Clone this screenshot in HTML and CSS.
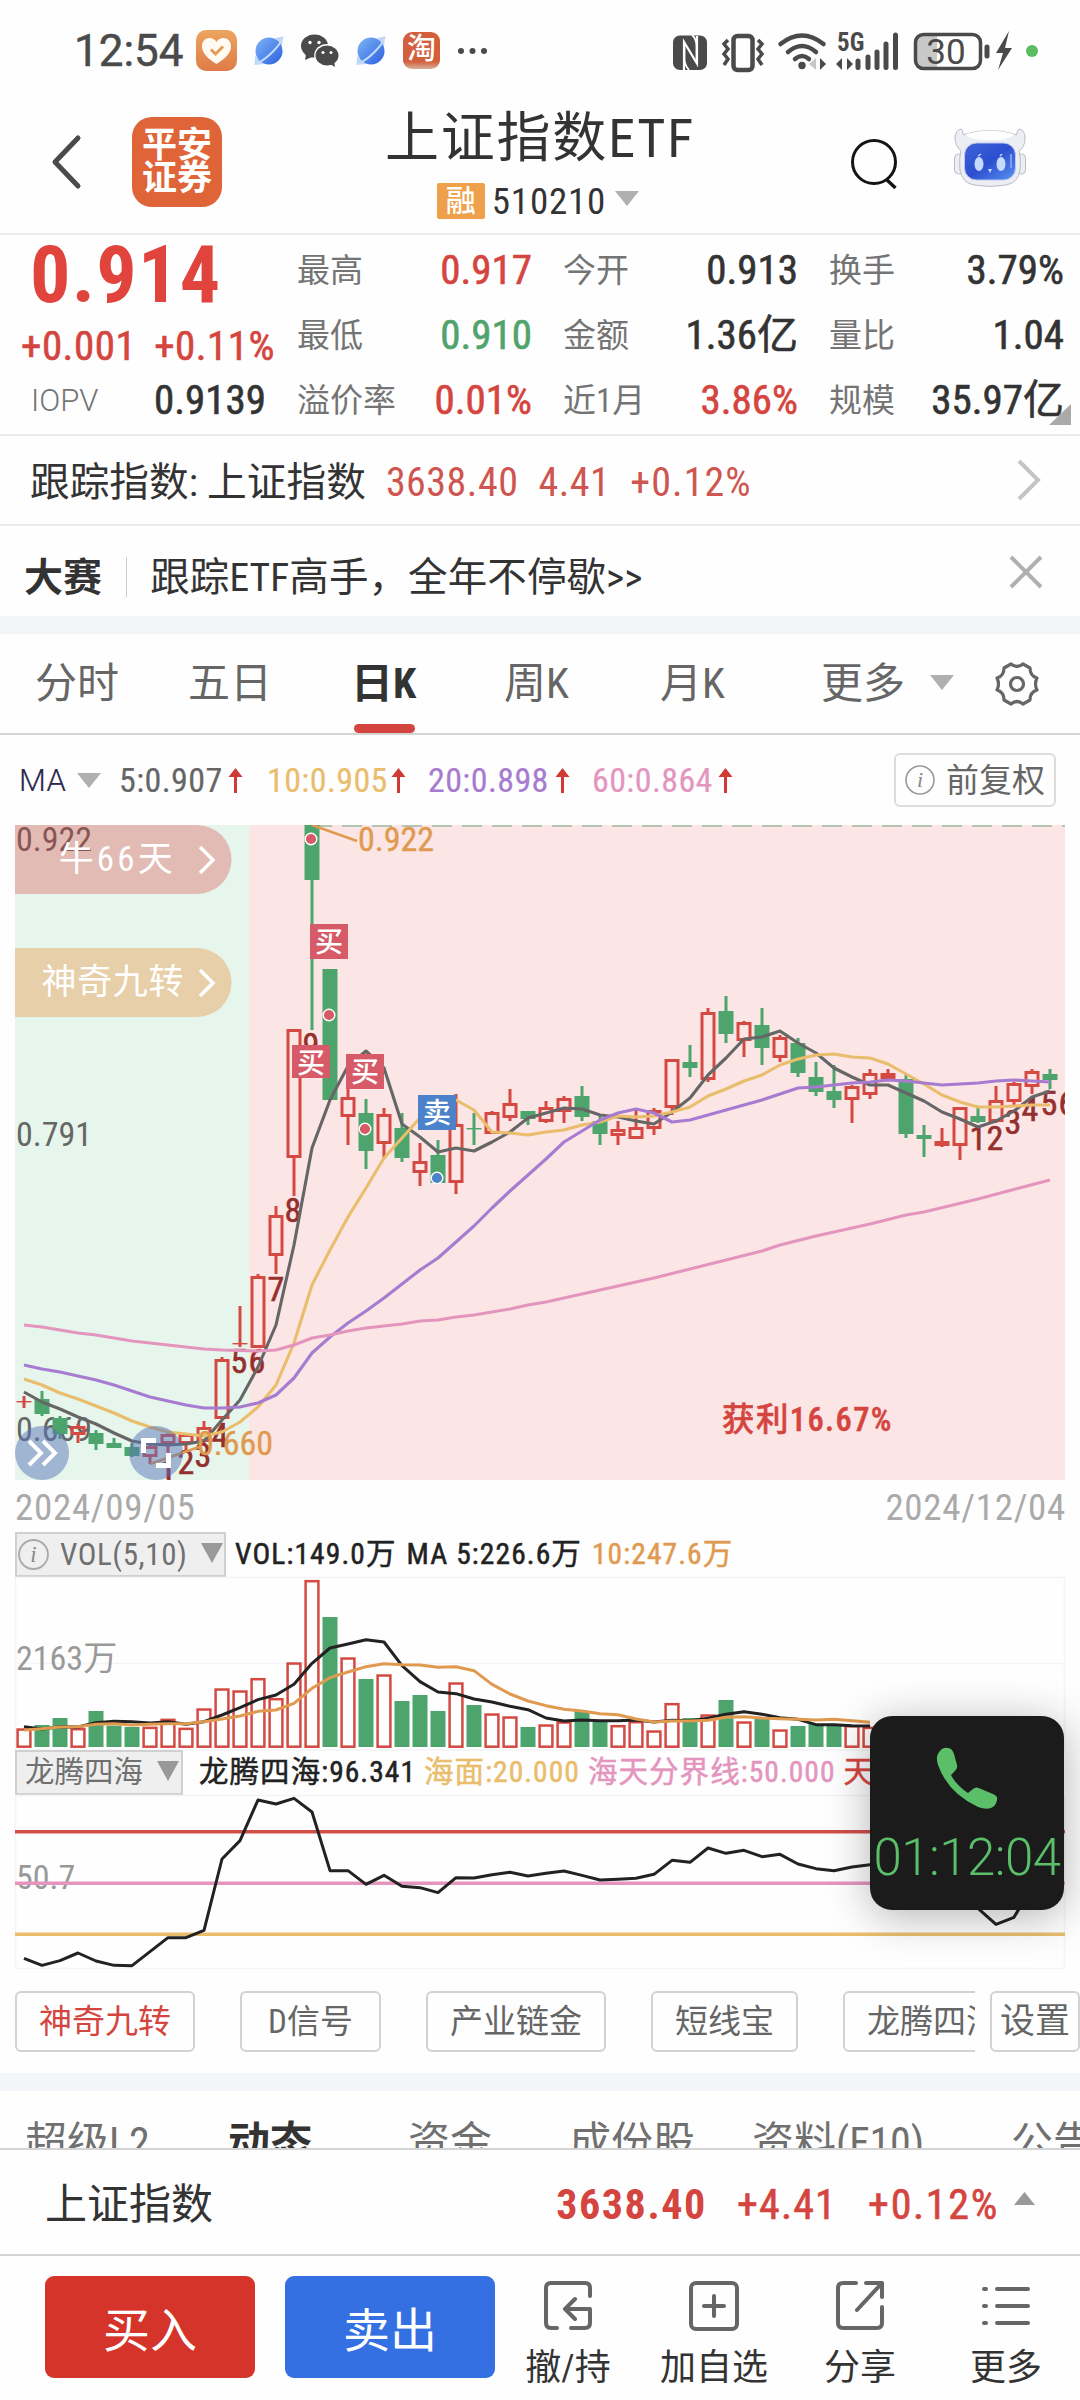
FILE: index.html
```html
<!DOCTYPE html>
<html lang="zh-CN">
<head>
<meta charset="utf-8">
<title>上证指数ETF 510210</title>
<link rel="stylesheet" href="styles.css">
</head>
<body>
<div class="app">

<header class="status">
  <div class="status-left">
    <span class="clock">12:54</span>
    <svg class="ic-heart" width="41" height="41" viewBox="0 0 41 41"><defs><linearGradient id="gh" x1="0" y1="0" x2="0" y2="1"><stop offset="0" stop-color="#eba560"/><stop offset="1" stop-color="#df7b47"/></linearGradient></defs><rect width="41" height="41" rx="10" fill="url(#gh)"/><path d="M20.500 34C12 29 6 23 6 16.500C6 11 9.500 8 13.500 8C16.500 8 19 9.500 20.500 12C22 9.500 24.500 8 27.500 8C31.500 8 35 11 35 16.500C35 23 29 29 20.500 34Z" fill="#fffaf2"/><path d="M15 19.500l4.500 4.500l7.500-7.500" fill="none" stroke="#e69a58" stroke-width="3"/></svg>
    <svg class="ic-planet" width="30" height="30" viewBox="0 0 30 30"><defs><linearGradient id="gp" x1="0" y1="0" x2="1" y2="1"><stop offset="0" stop-color="#7fb6f5"/><stop offset="1" stop-color="#2b5fe0"/></linearGradient></defs><path d="M21 2L29 .5L28 10zM1 20L.5 29L10 28z" fill="#c3d6f8"/><circle cx="15" cy="15" r="13.500" fill="url(#gp)"/><path d="M29 1C26 10 13 23 2 28" fill="none" stroke="#c3dcfb" stroke-width="2"/></svg>
    <svg class="ic-wechat" width="38" height="33" viewBox="0 0 38 33"><ellipse cx="13.500" cy="12" rx="13.500" ry="11.500" fill="#4a4a4a"/><path d="M5 20l-1 6l7-3z" fill="#4a4a4a"/><ellipse cx="26" cy="21.500" rx="12.800" ry="11.500" fill="#fff"/><ellipse cx="26" cy="21.500" rx="11.500" ry="10" fill="#4a4a4a"/><path d="M29 30l5 3l-1-6z" fill="#4a4a4a"/><g fill="#fff"><circle cx="9" cy="8.500" r="1.700"/><circle cx="18" cy="8.500" r="1.700"/><circle cx="22" cy="18.500" r="1.500"/><circle cx="30" cy="18.500" r="1.500"/></g></svg>
    <svg class="ic-planet" width="30" height="30" viewBox="0 0 30 30"><path d="M21 2L29 .5L28 10zM1 20L.5 29L10 28z" fill="#c3d6f8"/><circle cx="15" cy="15" r="13.500" fill="url(#gp)"/><path d="M29 1C26 10 13 23 2 28" fill="none" stroke="#c3dcfb" stroke-width="2"/></svg>
    <span class="ic-tao">淘</span>
    <svg width="31" height="8" viewBox="0 0 31 8" fill="#4a4a4a"><circle cx="4" cy="4" r="3"/><circle cx="15.500" cy="4" r="3"/><circle cx="27" cy="4" r="3"/></svg>
  </div>
  <svg class="status-right" width="370" height="44" viewBox="670 28 370 44" fill="none" stroke="#4a4a4a">
    <rect x="673" y="34.500" width="34" height="34.500" rx="7" fill="#4a4a4a" stroke="none"/>
    <path d="M684 69V41L697 62.500V35" stroke="#fff" stroke-width="2.200"/><path d="M684.500 44V58Q684.500 64 689 69M696.500 60V45Q696.500 38 692 34" stroke="#fff" stroke-width="1.800"/>
    <rect x="733.500" y="35" width="19" height="34" rx="4" stroke-width="4.500"/>
    <path d="M728 39l-4 4l4 5l-4 5l4 5l-4 6M758 39l4 4l-4 5l4 5l-4 5l4 6" stroke-width="3.500"/>
    <path d="M780.500 43q21.500-17 43 0M788 51q14-12 28 0M795 58q7-6 14 0" stroke-width="4.500" stroke-linecap="round"/><circle cx="802" cy="64.500" r="3.700" fill="#4a4a4a" stroke="none"/>
    <path d="M816 57v12l-7-6z" fill="#c8c8c8" stroke="none"/><path d="M820 57v12l6-6z" fill="#4a4a4a" stroke="none"/>
    <path d="M842 57v12l-6-6zM847 57v12l6-6z" fill="#4a4a4a" stroke="none"/>
    <path d="M858 60v6.500M868 56v10.500M877 51v15.500M886 43v23.500M895.500 34v32.500" stroke-width="5" stroke-linecap="round"/>
    <path d="M923 33.500h14v34h-14q-7 0-7-7v-20q0-7 7-7z" fill="#c8c8c8" stroke="none"/>
    <rect x="915.500" y="33.500" width="65" height="34" rx="8" stroke-width="3.500"/><path d="M987 46v9" stroke-width="5" stroke-linecap="round"/>
    <path d="M1009 30l-13 22h7l-5 17l14-22h-7z" fill="#4a4a4a" stroke="none"/><circle cx="1032" cy="50" r="6" fill="#5bbd63" stroke="none"/>
    <text class="sb-5g" x="837" y="50">5G</text><text class="sb-bat" x="946" y="62.500">30</text>
  </svg>
</header>

<div class="titlebar">
  <svg class="back" width="32" height="56" viewBox="0 0 32 56"><path d="M29 4L6 28L29 52" fill="none" stroke="#4a4a4a" stroke-width="5" stroke-linecap="round" stroke-linejoin="round"/></svg>
  <div class="broker"><span>平安</span><span>证券</span></div>
  <div class="title">
    <h1>上证指数ETF</h1>
    <div class="code"><b>融</b><span>510210</span><svg width="24" height="15"><path d="M0 0h24L12 15z" fill="#b0b0b0"/></svg></div>
  </div>
  <svg class="search" width="50" height="52" viewBox="0 0 50 52" fill="none" stroke="#141414"><circle cx="24" cy="24" r="21.500" stroke-width="3"/><path d="M37 42l8.500 8" stroke-width="3.500"/></svg>
  <svg class="robot" width="72" height="60" viewBox="0 0 72 60"><defs><linearGradient id="gr" x1="0" y1="0" x2="1" y2="1"><stop offset="0" stop-color="#3f63d8"/><stop offset=".5" stop-color="#2c4fd0"/><stop offset="1" stop-color="#5a94f2"/></linearGradient></defs><g fill="#eceef3" stroke="#b9bdc8" stroke-width="1"><rect x=".5" y="26" width="9" height="20" rx="4"/><rect x="62.500" y="26" width="9" height="20" rx="4"/><path d="M1 9Q2 2 7 1Q9 1 9 6Q9 8 12 6Q36-1 60 6Q63 8 63 6Q63 1 66 1Q71 3 71 10Q71 19 65 23Q67 30 66 42Q64 55 52 57Q36 60 20 57Q8 55 6 42Q5 30 7 23Q1 18 1 9Z"/></g><path d="M12 6Q36-1 60 6Q57 12 36 12Q15 12 12 6Z" fill="#fff"/><rect x="10.500" y="15" width="51" height="37" rx="12" fill="url(#gr)" stroke="#b8c8f0"/><g fill="#c6dafb"><ellipse cx="25" cy="36" rx="4.500" ry="7"/><ellipse cx="47" cy="36" rx="4.500" ry="7"/><path d="M34 41h4l-2 4z"/></g><path d="M24 28l3-2M46 28l2-2" stroke="#c6dafb" stroke-width="1.500"/><path d="M57 26v14" stroke="#7f9cec" stroke-width="2"/></svg>
</div>

<section class="quote">
  <div class="quote-main">
    <div class="price">0.914</div>
    <div class="change"><span>+0.001</span><span>+0.11%</span></div>
    <div class="pair iopv"><span class="k">IOPV</span><span class="v">0.9139</span></div>
  </div>
  <div class="col"><div class="pair"><span class="k">最高</span><span class="v up">0.917</span></div><div class="pair"><span class="k">最低</span><span class="v down">0.910</span></div><div class="pair"><span class="k">溢价率</span><span class="v up">0.01%</span></div></div>
  <div class="col"><div class="pair"><span class="k">今开</span><span class="v">0.913</span></div><div class="pair"><span class="k">金额</span><span class="v">1.36亿</span></div><div class="pair"><span class="k">近1月</span><span class="v up">3.86%</span></div></div>
  <div class="col"><div class="pair"><span class="k">换手</span><span class="v">3.79%</span></div><div class="pair"><span class="k">量比</span><span class="v">1.04</span></div><div class="pair"><span class="k">规模</span><span class="v">35.97亿</span></div></div>
  <svg class="corner" width="22" height="21"><path d="M22 0v21H0z" fill="#aaa"/></svg>
</section>

<section class="track">
  <span class="track-name">跟踪指数: 上证指数</span><span class="up">3638.40</span><span class="up">4.41</span><span class="up">+0.12%</span>
  <svg width="26" height="44" viewBox="0 0 26 44"><path d="M3 3L22 22L3 41" fill="none" stroke="#c4c4c4" stroke-width="4"/></svg>
</section>

<section class="contest">
  <b>大赛</b><i></i><span>跟踪ETF高手，全年不停歇&gt;&gt;</span>
  <svg width="34" height="34" viewBox="0 0 34 34"><path d="M2 2L32 32M32 2L2 32" stroke="#b0b0b0" stroke-width="4"/></svg>
</section>

<div class="band"></div>

<nav class="periods">
  <span>分时</span><span>五日</span><span class="on">日K</span><span>周K</span><span>月K</span><span>更多</span>
  <svg class="tri" width="24" height="15"><path d="M0 0h24L12 15z" fill="#b0b0b0"/></svg>
  <svg class="gear" width="44" height="46" viewBox="-22 -23 44 46" fill="none" stroke="#666" stroke-width="3.200" stroke-linejoin="round"><path d="M-6-20Q0-15 6-20L13-16Q13-8 20-6Q17 0 20 6Q13 8 13 16L6 20Q0 15-6 20L-13 16Q-13 8-20 6Q-17 0-20-6Q-13-8-13-16Z"/><circle r="6.500"/></svg>
</nav>

<div class="ma">
  <span class="m0">MA</span><svg width="24" height="15"><path d="M0 0h24L12 15z" fill="#b0b0b0"/></svg>
  <span class="m5">5:0.907</span><svg class="arr" width="15" height="25"><path d="M7.500 0L14.500 9H9v16H6V9H.5z" fill="#cf3a34"/></svg>
  <span class="m10">10:0.905</span><svg class="arr" width="15" height="25"><path d="M7.500 0L14.500 9H9v16H6V9H.5z" fill="#cf3a34"/></svg>
  <span class="m20">20:0.898</span><svg class="arr" width="15" height="25"><path d="M7.500 0L14.500 9H9v16H6V9H.5z" fill="#cf3a34"/></svg>
  <span class="m60">60:0.864</span><svg class="arr" width="15" height="25"><path d="M7.500 0L14.500 9H9v16H6V9H.5z" fill="#cf3a34"/></svg>
  <div class="fq"><svg width="30" height="30" viewBox="0 0 30 30"><circle cx="15" cy="15" r="14" fill="none" stroke="#999" stroke-width="1.600"/><text class="info-i" x="15" y="22">i</text></svg>前复权</div>
</div>

<div class="kline">
  <svg id="kchart" width="1050" height="655" viewBox="15 825 1050 655"></svg>
  <div class="pill bull"><span>牛66天</span><svg width="18" height="30" viewBox="0 0 18 30"><path d="M2 2L15 15L2 28" fill="none" stroke="#fff" stroke-width="3.500"/></svg></div>
  <div class="pill nine"><span>神奇九转</span><svg width="18" height="30" viewBox="0 0 18 30"><path d="M2 2L15 15L2 28" fill="none" stroke="#fff" stroke-width="3.500"/></svg></div>
</div>
<div class="dates"><span>2024/09/05</span><span>2024/12/04</span></div>

<div class="sub">
  <div class="sel vol-sel"><svg width="31" height="31" viewBox="0 0 30 30"><circle cx="15" cy="15" r="14" fill="none" stroke="#aaa" stroke-width="1.800"/><text class="info-i" x="15" y="22">i</text></svg><span>VOL(5,10)</span><svg width="22" height="20"><path d="M0 0h22L11 20z" fill="#999"/></svg></div>
  <div class="legend vol-legend"><span>VOL:149.0万</span><span>MA 5:226.6万</span><span class="or">10:247.6万</span></div>
</div>
<svg id="vchart" class="pane" width="1050" height="173" viewBox="15 1577 1050 173"></svg>
<div class="sub">
  <div class="sel dragon-sel"><span>龙腾四海</span><svg width="22" height="20"><path d="M0 0h22L11 20z" fill="#999"/></svg></div>
  <div class="legend dragon-legend"><span>龙腾四海:96.341</span><span class="yl">海面:20.000</span><span class="pk">海天分界线:50.000</span><span class="up">天</span></div>
</div>
<svg id="dchart" class="pane" width="1050" height="174" viewBox="15 1795 1050 174"></svg>

<div class="chips">
  <div class="chip-scroll"><span class="chip sel-chip">神奇九转</span><span class="chip">D信号</span><span class="chip">产业链金</span><span class="chip">短线宝</span><span class="chip">龙腾四海</span></div>
  <span class="chip setting">设置</span>
</div>

<div class="band"></div>

<nav class="info">
  <span>超级L2</span><span class="active">动态</span><span>资金</span><span>成份股</span><span>资料(F10)</span><span>公告</span>
</nav>

<section class="index">
  <span class="index-name">上证指数</span><b>3638.40</b><span class="up">+4.41</span><span class="up">+0.12%</span>
  <svg width="21" height="13"><path d="M0 13h21L10.500 0z" fill="#999"/></svg>
</section>

<footer class="actions">
  <button class="buy">买入</button><button class="sell">卖出</button>
  <div class="act first"><svg width="52" height="52" viewBox="0 0 52 52"><path d="M48 16V8Q48 3 43 3H9Q4 3 4 8V43Q4 48 9 48H15M29 48H43Q48 48 48 43V29H25M33 19L23 29L33 39"/></svg><span>撤/持</span></div>
  <div class="act"><svg width="52" height="52" viewBox="0 0 52 52"><rect x="3" y="3" width="46" height="46" rx="5"/><path d="M26 16v20M16 26h20"/></svg><span>加自选</span></div>
  <div class="act"><svg width="52" height="52" viewBox="0 0 52 52"><path d="M22 3H9Q4 3 4 8V43Q4 48 9 48H43Q48 48 48 43V27M32 3H48V17M48 3L23 30"/></svg><span>分享</span></div>
  <div class="act"><svg width="52" height="52" viewBox="0 0 52 52"><path d="M4 9h2M4 26h2M4 43h2M17 9h31M17 26h31M17 43h31"/></svg><span>更多</span></div>
</footer>

<aside class="call">
  <svg width="62" height="62" viewBox="0 0 62 62"><path d="M4 4Q7 0 12 1Q16 1 18 7L21 18Q22 22 18 25L15 28Q20 38 32 46L37 42Q40 39 45 42L57 47Q62 49 61 53Q60 59 55 61Q50 63 42 60Q12 46 2 18Q-1 9 4 4Z" fill="#5bbf6a"/></svg>
  <span>01:12:04</span>
</aside>
</div>
<script src="chart.js"></script>
</body>
</html>
```
FILE: styles.css
```css
* { box-sizing: border-box; }
body { margin: 0; background: #fff; }
.app { position: relative; width: 1080px; height: 2400px; overflow: hidden; display: flex; flex-direction: column; background: #fefefe; color: #333; font-family: "Roboto Condensed", "Noto Sans CJK SC", sans-serif; font-size: 33px; line-height: 1; }
.app > * { flex: none; }
svg { display: block; flex: none; overflow: visible; }
span, b { white-space: nowrap; }
.up { color: #d5453f; }
.down { color: #4fa36c; }

.status { height: 96px; padding: 5px 40px 0 74px; display: flex; align-items: center; justify-content: space-between; }
.status-left { display: flex; align-items: center; height: 90px; }
.clock { font: 400 44px Roboto, sans-serif; color: #4a4a4a; width: 122px; -webkit-text-stroke: .5px #4a4a4a; }
.ic-planet { margin: 0 17px; }
.ic-tao { width: 37px; height: 37px; margin-right: 17px; border-radius: 9px; background: linear-gradient(#d3603c 80%, #d9b09c); color: #fff; font-size: 29px; font-weight: 500; line-height: 34px; text-align: center; }
.sb-5g { font: 700 25px "Roboto Condensed", sans-serif; fill: #4a4a4a; stroke: none; }
.sb-bat { font: 400 35px Roboto, sans-serif; fill: #4a4a4a; stroke: none; text-anchor: middle; }

.titlebar { height: 139px; padding: 0 53px 0 49px; border-bottom: 2px solid #eaeaea; display: flex; align-items: flex-start; }
.back { margin-top: 38px; }
.broker { width: 90px; height: 90px; margin: 21px 0 0 51px; border-radius: 20px; background: #df6539; color: #fff; font-size: 35px; font-weight: 700; line-height: 33px; display: flex; flex-direction: column; align-items: center; justify-content: center; }
.title { margin-left: 165px; width: 306px; display: flex; flex-direction: column; align-items: center; }
h1 { margin: 16px 0 0; font: 400 54px/54px "Roboto Condensed", "Noto Sans CJK SC", sans-serif; letter-spacing: 1.800px; white-space: nowrap; }
.code { display: flex; align-items: center; margin-top: 17px; height: 36px; margin-right: 4px; font-size: 37px; }
.code b { width: 48px; height: 36px; background: #efa04a; color: #fff; font-size: 30px; font-weight: 500; line-height: 35px; text-align: center; margin-right: 7px; border-radius: 2px; }
.code span { letter-spacing: .8px; }
.code svg { margin: -6px 0 0 9px; }
.search { margin: 42px 0 0 157px; }
.robot { margin: 32px 0 0 54px; }

.quote { position: relative; height: 201px; border-bottom: 2px solid #eaeaea; padding-left: 20px; display: flex; }
.quote-main { flex: none; width: 246px; margin-right: 31px; padding-top: 1px; }
.price { font-size: 80px; font-weight: 700; line-height: 78px; color: #e0443c; padding-left: 10px; letter-spacing: 1.300px; }
.change { display: flex; justify-content: space-between; margin-left: 1px; width: 254px; height: 64px; align-items: center; color: #d5453f; font-size: 41px; letter-spacing: .5px; -webkit-text-stroke: .6px; }
.col { flex: none; width: 235px; margin-right: 31px; padding-top: 3px; }
.pair { display: flex; align-items: center; justify-content: space-between; height: 65px; }
.iopv { height: 47px; padding-left: 11px; margin-top: -1px; }
.k { color: #747474; }
.iopv .k { font-family: Roboto, sans-serif; font-weight: 300; font-size: 31px; }
.v { font-size: 41px; -webkit-text-stroke: .6px; }
.corner { position: absolute; right: 9px; bottom: 9px; }

.track { height: 90px; border-bottom: 2px solid #eaeaea; padding: 5px 38px 0 30px; display: flex; align-items: center; font-size: 40px; gap: 20px; }
.track .up { color: #cf5650; letter-spacing: .5px; }
.track .up:last-of-type { letter-spacing: 1.100px; }
.track svg { margin-left: auto; margin-top: -6px; }
.track-name { font-size: 39.700px; }
.contest { height: 90px; padding: 14px 37px 0 24px; display: flex; align-items: center; font-size: 39.500px; letter-spacing: .1px; }
.contest b { font-size: 39px; }
.contest i { width: 1px; height: 40px; background: #ccc; margin: -3px 23px 0 24px; }
.contest svg { margin-left: auto; margin-top: -12px; }
.band { height: 18px; background: #f3f5f9; }

.periods { height: 101px; border-bottom: 2px solid #d4d4d4; display: grid; grid-template-columns: 153px 163px 153px 156px 161px 109px 65px 60px; padding-left: 35px; align-items: center; font-size: 42px; color: #666; }
.periods span { position: relative; }
.periods .on { font-weight: 700; color: #333; }
.on::after { content: ""; position: absolute; left: 3px; top: 61px; width: 61px; height: 9px; border-radius: 5px; background: #d5453f; }
.tri { margin-top: -3px; }

.ma { height: 90px; padding: 0 24px 0 19px; display: flex; align-items: center; font-size: 34px; }
.ma span { -webkit-text-stroke: .2px; letter-spacing: .4px; }
.ma .m0 { font-family: Roboto, sans-serif; font-weight: 300; font-size: 31px; color: #2a2950; width: 58px; }
.ma .m5 { width: 109px; margin-left: 18px; color: #666; }
.ma .m10 { width: 124px; color: #e9bd6c; margin-left: 24px; }
.ma .m20 { width: 127px; color: #a77bd0; margin-left: 22px; }
.ma .m60 { width: 126px; color: #e495be; margin-left: 22px; }
.fq { margin-left: auto; width: 162px; height: 54px; border: 2px solid #ddd; border-radius: 6px; color: #666; font-size: 33px; display: flex; align-items: center; justify-content: center; gap: 11px; }
.info-i { font: italic 22px "Liberation Serif", serif; fill: #888; text-anchor: middle; }

.kline { position: relative; height: 655px; padding-left: 15px; }
#kchart { overflow: hidden; }
.pill { position: absolute; left: 15px; width: 216px; height: 69px; display: flex; align-items: center; justify-content: flex-end; color: #fff; font-size: 35px; padding-right: 15px; }
.pill svg { margin-left: 14px; }
.bull { top: 0; }
.bull span { letter-spacing: 3.200px; margin-right: 8px; }
.nine { top: 123px; }
.nine span { letter-spacing: .6px; }
.dates { height: 52px; padding: 3px 14px 0 15px; display: flex; align-items: center; justify-content: space-between; color: #aaa; font-size: 37px; letter-spacing: .7px; }

.sub { height: 45px; padding-left: 15px; display: flex; align-items: center; }
.sel { height: 45px; border: 2px solid #d0d0d0; background: #efefef; color: #707070; display: flex; align-items: center; font-size: 31px; }
.vol-sel { width: 211px; padding-left: 1px; }
.vol-sel span { margin: 0 15px 0 11px; width: 126px; letter-spacing: .6px; }
.dragon-sel { width: 168px; padding-left: 8px; font-size: 29.500px; gap: 14px; }
.sel svg:last-child { margin-top: -4px; }
.legend { display: flex; color: #222; font-size: 29.500px; -webkit-text-stroke: .5px; }
.vol-legend { margin-left: 9px; gap: 10px; letter-spacing: 1.100px; }
.dragon-legend { margin-left: 16px; gap: 8px; letter-spacing: 1.050px; }
.or { color: #e09a50; }
.yl { color: #e9bd6c; }
.pk { color: #e495be; }
.pane { margin-left: 15px; }

.chips { height: 104px; padding: 22px 0 0 15px; display: flex; }
.chip-scroll { width: 960px; overflow: hidden; display: flex; gap: 45px; }
.chip { flex: none; height: 61px; min-width: 141px; border: 2px solid #d2d2d2; border-radius: 6px; padding: 0 22px; color: #666; font-size: 33px; line-height: 58px; text-align: center; }
.sel-chip { color: #d5453f; }
.setting { margin-left: 15px; width: 90px; min-width: 0; padding: 0; font-size: 35px; }

.info { height: 59px; overflow: hidden; border-bottom: 2px solid #d4d4d4; padding: 26px 0 0 25px; display: grid; grid-template-columns: 203px 180px 161px 183px 259px 100px; font-size: 42px; line-height: 52px; color: #707070; }
.info .active { font-weight: 700; color: #333; }
.index { height: 106px; border-bottom: 2px solid #d4d4d4; display: flex; align-items: center; padding: 5px 45px 0 45px; font-size: 42px; }
.index-name { margin-right: auto; }
.index b { color: #d5453f; letter-spacing: 1.600px; margin-right: 30px; }
.index .up { -webkit-text-stroke: .6px; letter-spacing: 1.200px; margin-right: 31px; }
.index .up + .up { margin-right: 15px; letter-spacing: 1.700px; }
.index svg { margin-top: -12px; }

.actions { height: 144px; display: flex; padding: 20px 0 0 45px; }
button { width: 210px; height: 102px; border: 0; border-radius: 9px; margin-right: 30px; padding: 0 0 2px; color: #fff; font: 400 47px "Noto Sans CJK SC", sans-serif; }
.buy { background: #d5342a; }
.sell { background: #3470e2; }
.act { display: flex; flex-direction: column; align-items: center; width: 146px; padding-top: 4px; font-size: 36px; }
.first { margin-left: -30px; }
.act svg { fill: none; stroke: #666; stroke-width: 4; stroke-linecap: round; stroke-linejoin: round; }
.act span { margin-top: 18px; }

.call { position: absolute; left: 870px; top: 1716px; width: 194px; height: 194px; border-radius: 22px; background: #1b1b1b; box-shadow: 0 6px 44px rgba(0, 0, 0, .3); display: flex; flex-direction: column; align-items: center; padding-top: 31px; color: #5bbf6a; font: 350 51px/51px Roboto, sans-serif; }
.call span { margin-top: 23px; letter-spacing: -.5px; }

.axis { font: 400 34px "Roboto Condensed", "Noto Sans CJK SC", sans-serif; fill: #666; }
.axis.light { fill: #999; }
.axis.top { fill: #8a5655; }
.axis.orange { fill: #e09a50; stroke: #e09a50; stroke-width: .4; }
.nine-no { font: 400 34px "Roboto Condensed", sans-serif; fill: #942f2d; stroke: #942f2d; stroke-width: .6; text-anchor: middle; }
.tag { font: 500 28px "Noto Sans CJK SC", sans-serif; fill: #fff; text-anchor: middle; }
.profit { font: 500 32.500px "Roboto Condensed", "Noto Sans CJK SC", sans-serif; fill: #d5453f; letter-spacing: 1.400px; stroke: #d5453f; stroke-width: .5; }
```
FILE: chart.js
```js
const RED = '#d44a42', GREEN = '#4da56d';
const cx = i => 24 + 18 * i;
const rect = (x, y, w, h, a) => `<rect x="${x}" y="${y}" width="${w}" height="${h}" ${a}/>`;
const line = (pts, color, w) => `<polyline points="${pts.map(p => p.join()).join(' ')}" fill="none" stroke="${color}" stroke-width="${w}" stroke-linejoin="round"/>`;
const series = (ys, color, w) => line(ys.map((y, i) => [cx(i), y]), color, w);
const text = (x, y, cls, s) => `<text x="${x}" y="${y}" class="${cls}">${s}</text>`;

// direction, high, body top, body bottom, low
const candles = [
['r',1396,1401,1402,1408],['g',1391,1399,1414,1416],['g',1416,1418,1434,1439],['r',1424,1426,1435,1443],['g',1430,1433,1444,1450],
['g',1438,1443,1448,1448],['g',1443,1447,1456,1457],['r',1440,1446,1457,1464],['r',1433,1434,1444,1479],['r',1434,1434,1444,1450],
['r',1421,1427,1442,1444],['r',1357,1359,1419,1419],['r',1306,1343,1344,1347],['r',1274,1276,1348,1348],['r',1206,1215,1256,1274],
['r',1029,1029,1158,1196],['g',825,825,880,1030],['g',969,969,1100,1100],['r',1080,1097,1117,1145],['g',1099,1113,1151,1169],
['r',1108,1114,1144,1159],['g',1113,1128,1158,1162],['r',1143,1161,1173,1186],['g',1140,1155,1183,1183],['r',1094,1124,1183,1194],
['g',1113,1128,1129,1145],['r',1111,1112,1134,1134],['r',1089,1103,1118,1121],['g',1111,1111,1119,1125],['r',1101,1107,1122,1123],
['r',1096,1098,1112,1123],['g',1086,1096,1117,1121],['g',1116,1121,1134,1145],['r',1121,1129,1136,1145],['r',1110,1127,1139,1139],
['r',1108,1110,1129,1135],['r',1059,1059,1108,1115],['g',1045,1062,1068,1077],['r',1008,1012,1080,1082],['g',996,1011,1034,1043],
['r',1021,1022,1041,1057],['g',1008,1025,1048,1065],['r',1035,1037,1058,1062],['g',1038,1043,1073,1077],['g',1062,1077,1092,1096],
['g',1065,1091,1100,1108],['r',1085,1086,1100,1123],['r',1069,1073,1095,1099],['r',1069,1073,1079,1080],['g',1075,1079,1134,1138],
['g',1125,1135,1139,1157],['r',1128,1141,1146,1147],['r',1107,1107,1146,1160],['g',1107,1116,1122,1123],['r',1086,1100,1122,1123],
['r',1082,1083,1102,1105],['r',1069,1071,1087,1094],['g',1069,1074,1080,1089]];

const ma5 = [1392,1402,1409,1417,1424,1433,1441,1444,1445,1444,1441,1420,1400,1367,1325,1245,1148,1100,1066,1051,1068,1124,1137,1152,1148,1151,1142,1132,1118,1113,1108,1109,1115,1117,1121,1124,1112,1098,1075,1058,1039,1037,1031,1043,1053,1068,1077,1085,1085,1093,1101,1112,1119,1127,1121,1111,1097,1091];
const ma10 = [1379,1385,1393,1399,1406,1413,1421,1427,1432,1434,1436,1432,1422,1407,1385,1343,1285,1250,1217,1188,1158,1138,1118,1106,1100,1110,1132,1133,1135,1132,1130,1125,1122,1116,1117,1116,1112,1107,1096,1089,1081,1075,1065,1059,1055,1054,1057,1058,1064,1074,1084,1095,1102,1107,1107,1106,1105,1105];
const ma20 = [1365,1369,1372,1376,1380,1385,1391,1397,1401,1405,1408,1408,1407,1403,1395,1378,1353,1337,1323,1311,1298,1284,1270,1258,1242,1226,1208,1191,1175,1159,1142,1131,1120,1113,1109,1113,1122,1120,1115,1110,1105,1100,1094,1088,1087,1085,1083,1082,1080,1081,1083,1085,1084,1083,1081,1080,1081,1082];
const ma60 = [[0,1325],[1,1327],[3,1333],[4,1335],[6,1341],[8,1345],[10,1349],[11,1350],[13,1351],[14,1350],[15,1345],[16,1338],[17,1335],[18,1331],[19,1328],[21,1324],[22,1321],[23,1320],[24,1317],[25,1315],[27,1309],[28,1305],[29,1302],[31,1294],[35,1278],[39,1260],[41,1251],[42,1245],[44,1236],[47,1224],[49,1215],[50,1212],[53,1199],[57,1180]];

let k = rect(15, 825, 234, 655, 'fill="#e6f6ec"') + rect(249, 825, 816, 655, 'fill="#fbe6e5"');
k += '<path d="M15 825H197A34 34 0 0 1 197 894H15Z" fill="#e2bbb5"/><path d="M15 948H197A34 34 0 0 1 197 1017H15Z" fill="#e7cfa9"/>';
k += '<path d="M312 826H1065" stroke="#b3c4b0" stroke-width="2" stroke-dasharray="20 10"/>';
k += text(16, 851, 'axis top', '0.922') + text(16, 1146, 'axis', '0.791') + text(16, 1441, 'axis', '0.669');
candles.forEach(([d, h, t, b, l], i) => {
  const x = cx(i), c = d === 'r' ? RED : GREEN;
  if (b - t < 2) {
    k += rect(x - 1.5, h, 3, l - h, `fill="${c}"`) + rect(x - 7.5, t, 15, 1.4, `fill="${c}"`);
  } else if (d === 'g') {
    k += rect(x - 1.5, h, 3, l - h, `fill="${c}"`) + rect(x - 7.5, t, 15, b - t, `fill="${c}"`);
  } else {
    k += rect(x - 1.5, h, 3, t - h, `fill="${c}"`) + rect(x - 1.5, b, 3, Math.max(l - b, 0), `fill="${c}"`)
      + rect(x - 6, t + 1.5, 12, Math.max(b - t - 3, 1.5), `fill="none" stroke="${c}" stroke-width="3"`);
  }
});
[[168,1484,1],[186,1474,2],[203,1467,3],[220,1447,4],[239,1373,5],[257,1373,6],[276,1301,7],[293,1222,8],[311,1057,9],
 [978,1150,1],[995,1150,2],[1013,1134,3],[1030,1121,4],[1049,1115,5],[1067,1115,6]].forEach(([x, y, n]) => { k += text(x, y, 'nine-no', n); });
k += series(ma5, '#666', 3.1) + series(ma10, '#e9bd6c', 3.1) + series(ma20, '#a77bd0', 3.1)
  + line(ma60.map(([i, y]) => [cx(i), y]), '#e495be', 3.1);
k += line([[312, 825], [357, 841]], '#e09a50', 2.6) + line([[150, 1464], [199, 1447]], '#e09a50', 2.6);
k += text(358, 851, 'axis orange', '0.922') + text(197, 1455, 'axis orange', '0.660');
[[310,924,'买'],[292,1045,'买'],[346,1054,'买'],[418,1095,'卖']].forEach(([x, y, s]) => {
  k += rect(x, y, 38, s === '买' && x === 292 ? 33 : 35, `fill="${s === '买' ? '#d65a68' : '#4b82ca'}"`) + text(x + 19, y + 27.5, 'tag', s);
});
[[311,839,'#d65a68'],[329,1015,'#d65a68'],[365,1129,'#d65a68'],[437,1178,'#4b82ca']].forEach(([x, y, c]) => {
  k += `<circle cx="${x}" cy="${y}" r="5.8" fill="${c}" stroke="#fff" stroke-width="1.4"/>`;
});
k += '<g fill="rgba(88,115,184,.5)"><circle cx="42" cy="1453" r="27"/><circle cx="156" cy="1453" r="27"/></g>';
k += '<path d="M29 1441L41 1453L29 1465M43 1441L55 1453L43 1465" fill="none" stroke="#fff" stroke-width="4"/>';
k += '<path d="M143.500 1453V1440.500H156M156 1465.500H168.500V1453" fill="none" stroke="#fff" stroke-width="5"/>';
k += text(722, 1431, 'profit', '获利16.67%');
document.getElementById('kchart').innerHTML = k;

// volume bars: top edge of each bar on a 3x grid below y = 1520
const vols = 'r625 g615 g594 r624 g573 g617 g621 r620 r596 r623 r565 r505 r511 r474 r534 r427 r180 g291 r412 g477 r463 g543 g525 g573 r487 g555 r580 r589 g621 r613 r604 g573 g605 r615 r603 r631 r549 g594 r583 g540 r604 g597 r628 g618 g612 g617 r615 r620'.split(' ');
const v5 = [620,627,620,621,608,604,605,609,605,613,605,585,563,539,525,493,430,384,372,359,366,437,485,516,521,537,546,559,569,594,603,600,602,602,600,606,601,602,595,583,575,583,593,598,614,614,617,618];
const v10 = [630,626,621,620,613,611,615,613,611,611,605,597,588,574,570,550,505,473,456,440,431,434,435,442,440,452,493,522,543,557,568,573,581,584,597,606,603,603,601,592,590,594,596,598,600,598,602,607];
const vy = v => 1520 + v / 3;
let v = '<path d="M15.500 1577.500H1064.500V1750H15.500ZM15 1663.500H1065" fill="none" stroke="#f4f4f4" stroke-width="1.5"/>';
vols.forEach((s, i) => {
  const y = vy(+s.slice(1)), x = cx(i);
  v += s[0] === 'g' ? rect(x - 7.5, y, 15, 1747 - y, `fill="${GREEN}"`)
    : rect(x - 6.4, y + 1.2, 12.8, 1745.500 - y, `fill="none" stroke="${RED}" stroke-width="2.5"`);
});
v += series(v5.map(vy), '#222', 3) + series(v10.map(vy), '#e09a50', 3) + text(16, 1670, 'axis light', '2163万');
document.getElementById('vchart').innerHTML = v;

const osc = [655,676,662,639,663,676,677,635,593,593,571,357,302,180,192,175,216,392,392,433,406,439,443,458,413,414,404,397,408,400,393,406,420,418,415,403,361,367,324,340,331,350,343,372,386,392,381,374,372,372,380,410,460,505,553,532,440];
let d = '<path d="M15.500 1795.500H1064.500V1968.500H15.500Z" fill="none" stroke="#f4f4f4" stroke-width="1.5"/>';
d += text(16, 1889, 'axis light', '50.7');
d += rect(15, 1830, 1050, 3.5, 'fill="#cf4f49"') + rect(15, 1881.500, 1050, 3.5, 'fill="#e495be"') + rect(15, 1932.500, 1050, 3.5, 'fill="#e9bd6c"');
d += series(osc.map(y => 1740 + y / 3), '#222', 3);
document.getElementById('dchart').innerHTML = d;
```
